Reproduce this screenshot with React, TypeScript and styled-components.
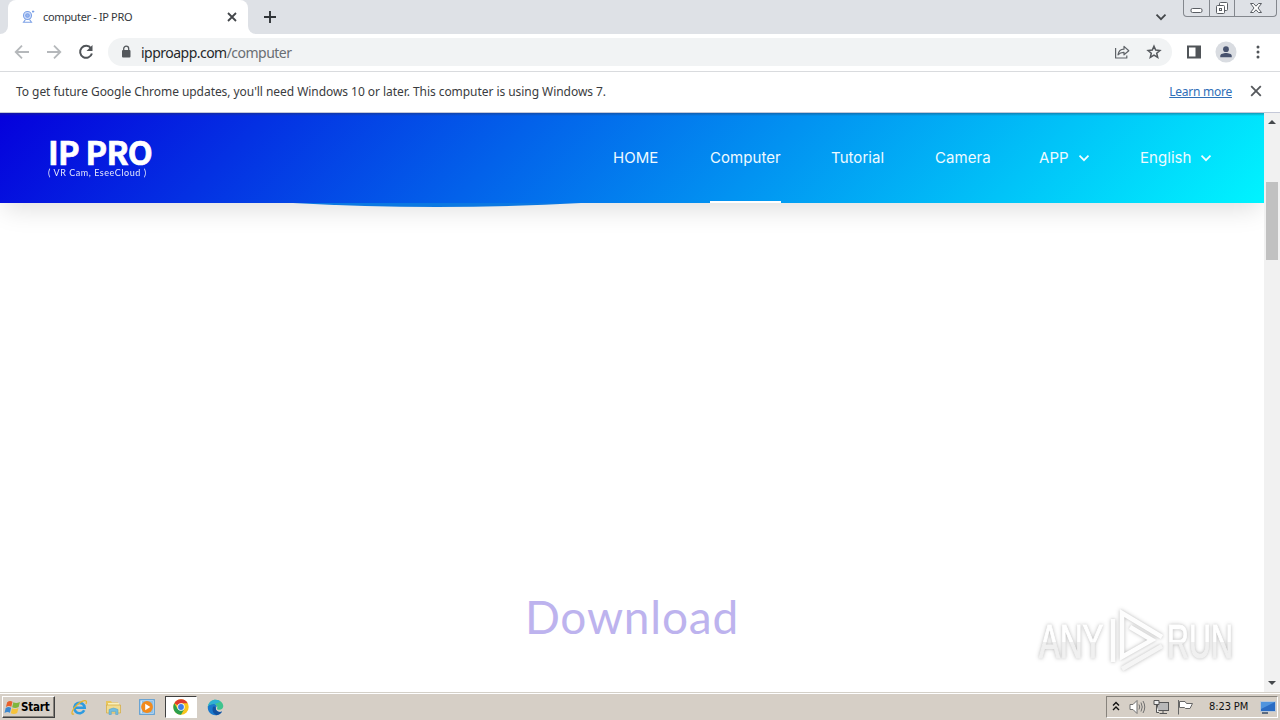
import React from 'react';
import styled, { createGlobalStyle } from 'styled-components';

const Global = createGlobalStyle`
  * { box-sizing: border-box; }
  body { margin: 0; background: #fff; overflow: hidden; }
`;

const ui = `'Noto Sans', 'Open Sans', sans-serif`;

const Screen = styled.div`
  width: 1280px;
  height: 720px;
  display: flex;
  flex-direction: column;
  overflow: hidden;
  font-family: ${ui};
  background: #fff;
`;

/* Browser frame */
const TabStrip = styled.header`
  height: 34px;
  flex: none;
  display: flex;
  background: #dee1e6;
`;
const StripEdge = styled.div`
  width: 8px;
  background: #fff;
  &::before { content: ''; display: block; height: 34px; background: #dee1e6; border-bottom-right-radius: 8px; }
`;
const Tab = styled.div`
  width: 240px;
  height: 34px;
  display: flex;
  align-items: center;
  padding: 0 11px 0 13px;
  background: #fff;
  border-radius: 8px 8px 0 0;
`;
const TabTitle = styled.span`
  flex: 1;
  margin-left: 8px;
  font-size: 11px;
  line-height: 16px;
  letter-spacing: -0.35px;
  color: #34373b;
  white-space: nowrap;
`;
const StripRest = styled.div`
  flex: 1;
  background: #fff;
`;
const StripFill = styled.div`
  height: 34px;
  display: flex;
  background: #dee1e6;
  border-bottom-left-radius: 8px;
  padding-left: 14px;
`;
const NewTab = styled.div`
  width: 16px;
  height: 34px;
  display: flex;
  align-items: center;
`;
const TabSearch = styled.div`
  margin-left: auto;
  width: 12px;
  height: 34px;
  display: flex;
  align-items: center;
`;
const WindowButtons = styled.div`
  display: flex;
  width: 94px;
  height: 17px;
  margin: 0 3px 0 16px;
  border: 1px solid #83878d;
  border-top: 0;
  border-radius: 0 0 4px 4px;
`;
const WindowButton = styled.div<{ $w: number }>`
  width: ${(p) => p.$w}px;
  display: flex;
  align-items: center;
  justify-content: center;
  & + & { border-left: 1px solid #83878d; }
`;

const Toolbar = styled.div`
  height: 38px;
  flex: none;
  display: flex;
  align-items: center;
  padding: 0 14px 1px 14px;
  border-bottom: 1px solid #d9dbde;
`;
const NavIcons = styled.div`
  display: flex;
  gap: 16px;
`;
const AddressBar = styled.div`
  width: 1064px;
  height: 28px;
  margin-left: 14px;
  display: flex;
  align-items: center;
  padding: 0 10px 0 12px;
  border-radius: 14px;
  background: #f1f3f4;
`;
const Url = styled.span`
  flex: 1;
  margin-left: 9px;
  padding-top: 1px;
  font-size: 14px;
  line-height: 18px;
  letter-spacing: -0.52px;
  color: #26282b;
`;
const UrlPath = styled.span`
  color: #6a6e73;
`;
const AddressIcons = styled.div`
  display: flex;
  gap: 16px;
`;
const ToolbarIcons = styled.div`
  margin-left: 14px;
  display: flex;
  align-items: center;
  gap: 13px;
`;

const InfoBar = styled.div`
  height: 41px;
  flex: none;
  display: flex;
  align-items: center;
  padding: 0 18px 2px 16px;
  border-bottom: 1px solid #c4c8d8;
  font-size: 12px;
  color: #3a3c40;
`;
const InfoText = styled.span`
  flex: 1;
  letter-spacing: -0.053px;
`;
const InfoLink = styled.a`
  margin-right: 18px;
  letter-spacing: -0.25px;
  color: #2f6fb8;
  text-decoration: underline;
`;

/* Web page */
const Viewport = styled.div`
  height: 579px;
  flex: none;
  display: flex;
`;
const Page = styled.main`
  width: 1264px;
  position: relative;
  overflow: hidden;
`;
const SiteHeader = styled.div`
  position: relative;
  z-index: 1;
  height: 90px;
  display: flex;
  padding-left: 48px;
  background: linear-gradient(to bottom, rgba(40, 50, 80, 0.4), rgba(40, 50, 80, 0) 3px),
    linear-gradient(135deg, #0500dc 0%, #00f4ff 100%);
  box-shadow: 0 10px 24px -4px rgba(0, 0, 0, 0.13);
`;
const Logo = styled.div`
  width: 565px;
  padding-top: 22px;
  color: #fff;
`;
const LogoName = styled.div`
  font: 700 32.5px/32px 'Noto Sans CJK SC', sans-serif;
  letter-spacing: -0.75px;
  white-space: nowrap;
  -webkit-text-stroke: 0.7px #fff;
`;
const LogoSub = styled.div`
  margin-top: 1px;
  font: 400 9px/9px 'Lato', sans-serif;
  letter-spacing: 0.55px;
  white-space: nowrap;
  opacity: 0.9;
`;
const SiteNav = styled.nav`
  display: flex;
`;
const NavItem = styled.a<{ $w: number; $active?: boolean }>`
  width: ${(p) => p.$w}px;
  height: 90px;
  margin-right: 50px;
  display: flex;
  align-items: center;
  justify-content: space-between;
  font: 400 15px/20px 'Inter', sans-serif;
  letter-spacing: 0.05px;
  white-space: nowrap;
  color: #eefaff;
  border-bottom: 2px solid ${(p) => (p.$active ? '#fff' : 'transparent')};
  border-top: 2px solid transparent;
`;
const HeroCurve = styled.div`
  position: absolute;
  z-index: 2;
  left: 285px;
  top: 90px;
  width: 304px;
  height: 4px;
  overflow: hidden;
  svg { display: block; }
`;
const Title = styled.h1`
  margin: 381px 0 0;
  text-align: center;
  font: 400 46px/66px 'Lato', sans-serif;
  letter-spacing: 0.8px;
  color: #bdb3ee;
`;
const Watermark = styled.div`
  position: absolute;
  left: 1039px;
  top: 492px;
  width: 204px;
  height: 72px;
  display: flex;
  align-items: center;
  filter: drop-shadow(0 0 2px rgba(0, 0, 0, 0.22)) drop-shadow(0 0 1px rgba(0, 0, 0, 0.08));
`;
const MarkWord = styled.span<{ $w: number; $scale: number }>`
  width: ${(p) => p.$w}px;
  flex: none;
  font: 400 49px/64px 'Liberation Sans Narrow', 'Liberation Sans', sans-serif;
  white-space: nowrap;
  transform: scaleX(${(p) => p.$scale});
  transform-origin: left;
`;
const MarkLetters = styled.span`
  display: inline-block;
  color: transparent;
  background: linear-gradient(#fff 52%, #f0f0f0 52%);
  background-clip: text;
  -webkit-background-clip: text;
  -webkit-text-stroke: 1.2px transparent;
`;
const MarkLogo = styled.div`
  display: flex;
  flex: none;
`;

const Scrollbar = styled.div`
  width: 16px;
  display: flex;
  flex-direction: column;
  align-items: center;
  justify-content: space-between;
  padding: 7px 0;
  background: #f1f1f1;
`;
const ScrollTrack = styled.div`
  flex: 1;
  width: 12px;
  padding-top: 58px;
`;
const ScrollThumb = styled.div`
  height: 78px;
  background: #c1c1c1;
`;

/* Taskbar */
const Taskbar = styled.footer`
  height: 28px;
  flex: none;
  display: flex;
  align-items: center;
  border-top: 1px solid #d4d0c8;
  box-shadow: inset 0 1px 0 #fff;
  background: #d6cfc6;
  padding: 1px 2px 0 2px;
`;
const StartButton = styled.div`
  width: 53px;
  height: 22px;
  display: flex;
  align-items: center;
  padding-left: 1px;
  border: 1px solid;
  border-color: #fff #404040 #404040 #fff;
  box-shadow: inset -1px -1px 0 #87837c;
  font: 700 11.5px/16px 'DejaVu Sans Condensed', sans-serif;
  letter-spacing: -0.2px;
  color: #000;
`;
const QuickLaunch = styled.div`
  display: flex;
  align-items: center;
  margin-left: 7px;
`;
const TaskItem = styled.div<{ $active?: boolean }>`
  width: ${(p) => (p.$active ? 32 : 34)}px;
  height: 22px;
  margin: ${(p) => (p.$active ? '0 1px' : '0')};
  display: flex;
  align-items: center;
  justify-content: center;
  border: 1px solid;
  border-color: ${(p) => (p.$active ? '#404040 #fff #fff #404040' : 'transparent')};
  background: ${(p) => (p.$active ? '#fff' : 'transparent')};
`;
const Tray = styled.div`
  width: 172px;
  height: 22px;
  margin-left: auto;
  display: flex;
  align-items: center;
  padding-left: 5px;
  border: 1px solid;
  border-color: #87837c #fff #fff #87837c;
`;
const TrayIcon = styled.div<{ $ml?: number }>`
  display: flex;
  margin-left: ${(p) => p.$ml ?? 0}px;
`;
const Clock = styled.span`
  width: 41px;
  margin-left: 15px;
  font: 400 11px/16px 'DejaVu Sans Condensed', sans-serif;
  letter-spacing: -0.1px;
  white-space: nowrap;
  color: #111;
`;

const Cross = ({ size, color = '#43464a', w = 1.7 }: { size: number; color?: string; w?: number }) => (
  <svg width={size} height={size} viewBox="0 0 10 10" stroke={color} strokeWidth={w}>
    <path d="M1 1 9 9M9 1 1 9" />
  </svg>
);
const Chevron = ({ color, w }: { color: string; w: number }) => (
  <svg width="12" height="12" viewBox="0 0 12 12" fill="none" stroke={color} strokeWidth={w}>
    <path d="M1.5 3.7 6 8.2 10.5 3.7" />
  </svg>
);
const Arrow = ({ flip }: { flip?: boolean }) => (
  <svg width="16" height="16" viewBox="0 0 16 16" fill="none" stroke="#b5b8bb" strokeWidth="1.8">
    <path d={flip ? 'M1 8H14M8 1.7 14.3 8 8 14.3' : 'M15 8H2M8 1.7 1.7 8 8 14.3'} />
  </svg>
);
const Caret = ({ down }: { down?: boolean }) => (
  <svg width="8" height="4" viewBox="0 0 8 4"><path fill="#45484c" d={down ? 'M0 0H8L4 4Z' : 'M0 4H8L4 0Z'} /></svg>
);

const Favicon = () => (
  <svg width="14" height="14" viewBox="0 0 14 14" fill="none" stroke="#7ba0e6" strokeWidth="1.1">
    <circle cx="6.5" cy="5.5" r="4" fill="#d4e0fa" />
    <circle cx="6.5" cy="5.5" r="1.8" fill="#9bb8f2" />
    <path d="M4.500 9.500 2.500 12.300H10.500L8.500 9.500M11 1.500h2.300M12 .5v2.300" />
  </svg>
);
const ShareIcon = () => (
  <svg width="16" height="16" viewBox="0 0 16 16" fill="none" stroke="#5f6368" strokeWidth="1.2" strokeLinejoin="round">
    <path d="M1.600 4V14H12.800V11.500M4 10.800C4.600 7.200 6.800 5.300 10 5.200V2.400L14.800 6.700 10 10.800V8.300C7.500 8.200 5.600 9 4 10.800Z" />
  </svg>
);
const StarIcon = () => (
  <svg width="16" height="16" viewBox="0 0 16 16" fill="none" stroke="#54585c" strokeWidth="1.5">
    <path d="M8 2.200 9.700 6.100 13.900 6.500 10.700 9.300 11.700 13.400 8 11.200 4.300 13.400 5.300 9.300 2.100 6.500 6.300 6.100Z" />
  </svg>
);

const WindowsFlag = () => (
  <svg width="17" height="17" viewBox="0 0 16 16">
    <path d="M3 3C5 1.5 6.5 1.8 8 2.6L6.9 7.4C5.2 6.4 3.6 6.5 1.8 7.5Z" fill="#e8602b" />
    <path d="M8.8 3C10.5 4 12.5 4 15 2.8L13.8 7.6C11.7 8.7 9.5 8.7 7.7 7.8Z" fill="#7fb63c" />
    <path d="M1.6 8.4C3.5 7.3 5 7.3 6.7 8.3L5.6 13C4 12 2.4 12 .5 13.1Z" fill="#3c88cf" />
    <path d="M7.5 8.7C9.3 9.6 11.5 9.6 13.6 8.5L12.4 13.2C10.3 14.4 8 14.2 6.4 13.4Z" fill="#f6c33b" />
  </svg>
);
const ExplorerE = () => (
  <svg width="17" height="17" viewBox="0 0 17 17" fill="none">
    <path d="M13.2 11.3A5.2 5.2 0 1 1 13.7 8.8H4.2" stroke="#2d9be0" strokeWidth="2.6" />
    <path d="M3 14.8C-.8 16.5 1 10.4 6.2 5.8 11.5 1 17.2-.1 15 5" stroke="#e7b52e" strokeWidth="1.3" />
  </svg>
);
const FolderIcon = () => (
  <svg width="17" height="17" viewBox="0 0 17 17">
    <path d="M1 2H6L7 3.5H13V7H1Z" fill="#e9c65c" />
    <path d="M3 4H14V8H3Z" fill="#f9efbb" />
    <path d="M1.5 6H15.5V14H1.5Z" fill="#f2dc90" stroke="#d3a93d" strokeWidth=".7" />
    <path d="M4 15.5V10.5Q8.5 7.5 13 10.5V15.5H10.7V12.5H6.3V15.5Z" fill="#73bddf" stroke="#4f9dc7" strokeWidth=".5" />
  </svg>
);
const MediaIcon = () => (
  <svg width="16" height="16" viewBox="0 0 16 16">
    <rect x=".7" y=".7" width="14.6" height="14.6" fill="#cfe5f8" stroke="#5f9fd3" strokeWidth="1.2" />
    <rect x="3" y="2" width="11" height="12" fill="#8fc1e8" />
    <circle cx="8" cy="8" r="5.9" fill="#f28a1c" />
    <path d="M6.2 4.8 11.3 8 6.2 11.2Z" fill="#fff" />
  </svg>
);
const ChromeIcon = () => (
  <svg width="16" height="16" viewBox="0 0 16 16">
    <circle cx="8" cy="8" r="7.7" fill="#f8c51c" />
    <path d="M8 8 1.3 4.2A7.7 7.7 0 0 1 14.7 4.2H8Z" fill="#df3b2f" />
    <path d="M1.3 4.2A7.7 7.7 0 0 0 8 15.7L11.3 9.9 8 8 4.7 9.9Z" fill="#2c9f4d" />
    <circle cx="8" cy="8" r="3.7" fill="#fff" />
    <circle cx="8" cy="8" r="2.9" fill="#3f7de8" />
  </svg>
);
const EdgeIcon = () => (
  <svg width="17" height="17" viewBox="0 0 17 17">
    <path d="M.8 7.600C.3 12.500 4 16.300 8.500 16.300 11.500 16.300 13.800 14.800 15 12.600 12 13.800 8.800 12 8.800 9.400 8.800 8 9.800 7.600 9.800 7 9.800 5.400 7.500 4.600 5.500 4.800 3 5 1.200 6 .8 7.600Z" fill="#1a78cc" />
    <path d="M.8 7.600C1.600 3.200 5 .7 8.600.7c4.500 0 7.700 3.200 7.700 6.400 0 2.300-1.700 3.700-3.900 3.700-1.600 0-2.700-.7-2.300-1.600.9-1.800-.9-4.100-3.600-4.100C3.800 5.100 1.400 6 .8 7.600Z" fill="#3fc48e" />
    <path d="M.8 7.600C1.600 3.200 5 .7 8.600.7 11 .7 12.500 1.600 13.500 2.500 11 4 8.500 5.100 6.500 5.100 3.800 5.100 1.400 6 .8 7.600Z" fill="#2fb0d2" />
    <path d="M6 8C4.600 11.500 6.500 14.800 9.500 16.200 12 16 13.900 14.700 15 12.600 12 13.800 8.800 12 8.800 9.400 8.800 8 7.500 6.800 6 8Z" fill="#12509f" />
  </svg>
);

export default function App() {
  return (
    <Screen>
      <Global />
      <TabStrip>
        <StripEdge />
        <Tab>
          <Favicon />
          <TabTitle>computer - IP PRO</TabTitle>
          <Cross size={10} w={1.8} />
        </Tab>
        <StripRest>
          <StripFill>
            <NewTab>
              <svg width="16" height="16" viewBox="0 0 16 16" stroke="#303438" strokeWidth="1.9"><path d="M8 2V14M2 8H14" /></svg>
            </NewTab>
            <TabSearch><Chevron color="#43464a" w={1.8} /></TabSearch>
            <WindowButtons>
              <WindowButton $w={25}>
                <svg width="13" height="15" viewBox="0 0 13 15"><rect x="1" y="7.500" width="11" height="4" rx="1.500" fill="#fff" stroke="#5a5e64" /></svg>
              </WindowButton>
              <WindowButton $w={25}>
                <svg width="14" height="15" viewBox="0 0 14 15" fill="#fff" stroke="#5a5e64">
                  <rect x="4.500" y="1.500" width="8" height="8" rx="1" /><rect x="1.500" y="4.500" width="8" height="8" rx="1" /><rect x="4.500" y="7.500" width="2" height="2" />
                </svg>
              </WindowButton>
              <WindowButton $w={42}>
                <svg width="14" height="13" viewBox="0 0 14 13" fill="#fff" stroke="#5a5e64">
                  <path d="M1.500 1.500H4.500L7 4.200 9.500 1.500H12.500L9 6 12.500 10.500H9.500L7 7.800 4.500 10.500H1.500L5 6Z" />
                </svg>
              </WindowButton>
            </WindowButtons>
          </StripFill>
        </StripRest>
      </TabStrip>

      <Toolbar>
        <NavIcons>
          <Arrow />
          <Arrow flip />
          <svg width="16" height="16" viewBox="0 0 16 16" fill="none">
            <path d="M13 4.300A6 6 0 1 0 13.900 9.500" stroke="#505458" strokeWidth="2" />
            <path d="M14.500 1V7H8.500Z" fill="#505458" />
          </svg>
        </NavIcons>
        <AddressBar>
          <svg width="12" height="14" viewBox="0 0 12 14"><rect x="2" y="5" width="8.500" height="7.500" rx="1" fill="#54585c" /><path d="M3.700 5.500V3.700a2.500 2.500 0 0 1 5 0V5.500" fill="none" stroke="#54585c" strokeWidth="1.300" /></svg>
          <Url>ipproapp.com<UrlPath>/computer</UrlPath></Url>
          <AddressIcons>
            <ShareIcon />
            <StarIcon />
          </AddressIcons>
        </AddressBar>
        <ToolbarIcons>
          <svg width="16" height="16" viewBox="0 0 16 16"><path d="M1 1.500H15V14.500H1ZM3 3.500V12.500H9.500V3.500Z" fill="#505458" fillRule="evenodd" /></svg>
          <svg width="22" height="22" viewBox="0 0 23 23"><circle cx="11.500" cy="11.500" r="11" fill="#d9dce1" /><circle cx="11.500" cy="8.500" r="3" fill="#47526e" /><path d="M5.500 17V15.500C5.500 13.500 9 12.500 11.500 12.500S17.500 13.500 17.500 15.500V17Z" fill="#47526e" /></svg>
          <svg width="16" height="16" viewBox="0 0 16 16" fill="#505458"><circle cx="8" cy="3" r="1.500" /><circle cx="8" cy="8" r="1.500" /><circle cx="8" cy="13" r="1.500" /></svg>
        </ToolbarIcons>
      </Toolbar>

      <InfoBar>
        <InfoText>To get future Google Chrome updates, you'll need Windows 10 or later. This computer is using Windows 7.</InfoText>
        <InfoLink>Learn more</InfoLink>
        <Cross size={12} color="#55585c" w={1.5} />
      </InfoBar>

      <Viewport>
        <Page>
          <SiteHeader>
            <Logo>
              <LogoName>IP PRO</LogoName>
              <LogoSub>( VR Cam, EseeCloud )</LogoSub>
            </Logo>
            <SiteNav>
              <NavItem $w={47}>HOME</NavItem>
              <NavItem $w={71} $active>Computer</NavItem>
              <NavItem $w={54}>Tutorial</NavItem>
              <NavItem $w={54}>Camera</NavItem>
              <NavItem $w={51}>APP<Chevron color="#f0fdff" w={1.700} /></NavItem>
              <NavItem $w={72}>English<Chevron color="#f0fdff" w={1.700} /></NavItem>
            </SiteNav>
          </SiteHeader>
          <HeroCurve>
            <svg width="304" height="4" viewBox="0 0 304 4"><path d="M8 0Q152 8 296 0Z" fill="#0b78e2" /></svg>
          </HeroCurve>
          <Title>Download</Title>
          <Watermark>
            <MarkWord $w={68} $scale={0.64}><MarkLetters>ANY</MarkLetters></MarkWord>
            <MarkLogo>
              <svg width="60" height="66" viewBox="0 0 60 66" fill="none" stroke="#fdfdfd" strokeWidth="4.500">
                <path d="M6 11V54M15 44V5L55 29M15 20V49L45 32 23 19" />
                <path d="M15 61 55 38" stroke="#f5f5f5" />
              </svg>
            </MarkLogo>
            <MarkWord $w={66} $scale={0.62}><MarkLetters>RUN</MarkLetters></MarkWord>
          </Watermark>
        </Page>
        <Scrollbar>
          <Caret />
          <ScrollTrack><ScrollThumb /></ScrollTrack>
          <Caret down />
        </Scrollbar>
      </Viewport>

      <Taskbar>
        <StartButton><WindowsFlag />Start</StartButton>
        <QuickLaunch>
          <TaskItem><ExplorerE /></TaskItem>
          <TaskItem><FolderIcon /></TaskItem>
          <TaskItem><MediaIcon /></TaskItem>
          <TaskItem $active><ChromeIcon /></TaskItem>
          <TaskItem><EdgeIcon /></TaskItem>
        </QuickLaunch>
        <Tray>
          <TrayIcon>
            <svg width="8" height="12" viewBox="0 0 8 12" fill="none" stroke="#111" strokeWidth="1.400"><path d="M1 4.500 4 1.500 7 4.500M1 9 4 6 7 9" /></svg>
          </TrayIcon>
          <TrayIcon $ml={9}>
            <svg width="17" height="16" viewBox="0 0 17 16" stroke="#707070"><path d="M1 5.500H4L8 1.500V14.500L4 10.500H1Z" fill="#fff" /><path d="M10 5.500Q11.500 8 10 10.500M12 3.500Q14.500 8 12 12.500M14 2Q17.500 8 14 14" fill="none" /></svg>
          </TrayIcon>
          <TrayIcon $ml={7}>
            <svg width="17" height="16" viewBox="0 0 17 16" stroke="#555"><rect x="4.500" y="3.500" width="11" height="8" fill="#b8b8b8" /><path d="M10 11.500V14M6.500 14.500H14" /><path d="M1 1.500H6V5.500H1ZM3.500 5.500V13.500H6" fill="#eee" /></svg>
          </TrayIcon>
          <TrayIcon $ml={7}>
            <svg width="17" height="16" viewBox="0 0 17 16" stroke="#666"><path d="M2.500 2.500H8L9.500 4.500H15.500L13 9.500H8.500L7.500 8.500H2.500Z" fill="#fff" /><path d="M1.500 1V15.500" /></svg>
          </TrayIcon>
          <Clock>8:23 PM</Clock>
          <TrayIcon $ml={10}>
            <svg width="16" height="16" viewBox="0 0 16 16"><rect x=".5" y="2.500" width="15" height="10" fill="#2a6cc4" stroke="#b8c7d8" /><path d="M1 3H15L1 10Z" fill="#4f94de" /><path d="M2 14H8" stroke="#344b68" strokeWidth="1.500" /></svg>
          </TrayIcon>
        </Tray>
      </Taskbar>
    </Screen>
  );
}
